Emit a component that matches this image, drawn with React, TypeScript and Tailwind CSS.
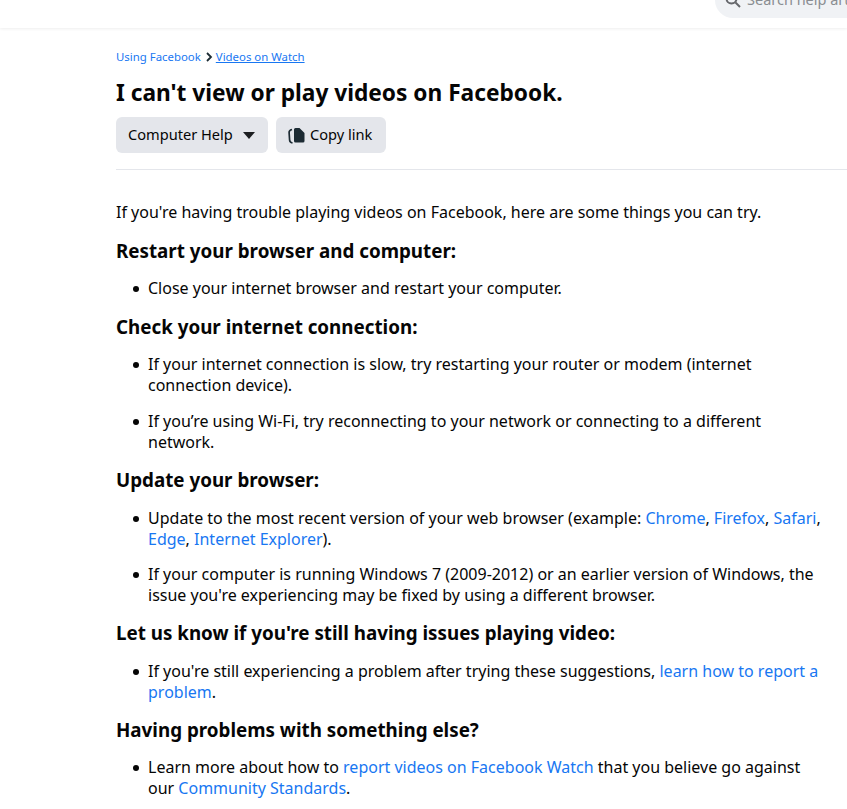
import React from "react";

const Link = ({ children }: { children: React.ReactNode }) => (
  <a className="text-[#1877f2]">{children}</a>
);

const H = ({ children, className = "" }: { children: React.ReactNode; className?: string }) => (
  <h3 className={`text-[18.8px] leading-[24px] font-bold text-[#050505] ${className}`}>{children}</h3>
);

const Li = ({ children, className = "" }: { children: React.ReactNode; className?: string }) => (
  <li className={`relative pl-[32px] pr-[26px] ${className}`}>
    <span className="absolute left-[17px] top-[8px] w-[6px] h-[6px] rounded-full bg-[#050505]" />
    {children}
  </li>
);

export default function App() {
  return (
    <div className="w-[847px] h-[809px] overflow-hidden bg-white text-[#050505] font-['Noto_Sans','Open_Sans',sans-serif]">
      <header className="h-[28px] flex justify-end items-end pb-[10px] shadow-[0_1px_3px_rgba(0,0,0,0.07)]">
        <div className="shrink-0 w-[132px] h-[36px] rounded-l-[18px] bg-[#f0f2f5] flex items-center pl-[10px] gap-[6px] overflow-hidden">
          <svg width="16" height="16" viewBox="0 0 16 16" fill="none" stroke="#65676b" strokeWidth="2" className="shrink-0">
            <circle cx="6.500" cy="6.500" r="5" />
            <path d="M10.500 10.500 15 15" />
          </svg>
          <span className="text-[14.5px] whitespace-nowrap text-[#8a8d91]">Search help articles</span>
        </div>
      </header>
      <main className="pl-[116px]">
        <nav className="mt-[21px] flex items-center text-[11.4px] leading-[16px] text-[#1877f2]">
          <span>Using Facebook</span>
          <svg width="12" height="12" viewBox="0 0 12 12" fill="none" stroke="#1c2b33" strokeWidth="1.800" className="ml-[2px] mr-[1px]">
            <path d="M4 2l4 4-4 4" />
          </svg>
          <span className="underline">Videos on Watch</span>
        </nav>
        <h1 className="mt-[12px] text-[22.7px] leading-[32px] font-bold">I can't view or play videos on Facebook.</h1>
        <div className="mt-[8px] flex gap-[8px]">
          <button className="h-[36px] w-[152px] rounded-[6px] bg-[#e4e6eb] flex items-center pl-[12px] text-[14.6px]">
            Computer Help
            <svg width="12" height="7" viewBox="0 0 12 7" className="ml-[10px]"><path d="M0 0h12L6 7z" fill="#1c1e21" /></svg>
          </button>
          <button className="h-[36px] w-[110px] rounded-[6px] bg-[#e4e6eb] flex items-center pl-[12px] gap-[5px] text-[14.6px]">
            <svg width="17" height="17" viewBox="0 0 17 17">
              <path d="M7.500 1h4l5 5v8a1.500 1.500 0 0 1-1.500 1.500H7.500A1.500 1.500 0 0 1 6 14V2.500A1.500 1.500 0 0 1 7.500 1z" fill="#1c2b33" />
              <path d="M4 2.500C2 3 1 3.800 1.100 5.500l.5 7.500c.1 1.600 1 2.600 2.900 3" fill="none" stroke="#1c2b33" strokeWidth="1.700" />
            </svg>
            Copy link
          </button>
        </div>
        <hr className="mt-[16px] border-t border-[#e4e6eb]" />
        <article className="text-[16px] leading-[21px]">
          <p className="mt-[32px]">If you're having trouble playing videos on Facebook, here are some things you can try.</p>
          <H className="mt-[16px]">Restart your browser and computer:</H>
          <ul className="mt-[15px]">
            <Li>Close your internet browser and restart your computer.</Li>
          </ul>
          <H className="mt-[16px]">Check your internet connection:</H>
          <ul className="mt-[15px]">
            <Li>If your internet connection is slow, try restarting your router or modem (internet connection device).</Li>
            <Li className="mt-[15px]">If you’re using Wi-Fi, try reconnecting to your network or connecting to a different network.</Li>
          </ul>
          <H className="mt-[15px]">Update your browser:</H>
          <ul className="mt-[16px]">
            <Li>Update to the most recent version of your web browser (example: <Link>Chrome</Link>, <Link>Firefox</Link>, <Link>Safari</Link>, <Link>Edge</Link>, <Link>Internet Explorer</Link>).</Li>
            <Li className="mt-[14px]">If your computer is running Windows 7 (2009-2012) or an earlier version of Windows, the issue you're experiencing may be fixed by using a different browser.</Li>
          </ul>
          <H className="mt-[15px]">Let us know if you're still having issues playing video:</H>
          <ul className="mt-[16px]">
            <Li>If you're still experiencing a problem after trying these suggestions, <Link>learn how to report a problem</Link>.</Li>
          </ul>
          <H className="mt-[15px]">Having problems with something else?</H>
          <ul className="mt-[15px]">
            <Li>Learn more about how to <Link>report videos on Facebook Watch</Link> that you believe go against our <Link>Community Standards</Link>.</Li>
          </ul>
        </article>
      </main>
    </div>
  );
}
